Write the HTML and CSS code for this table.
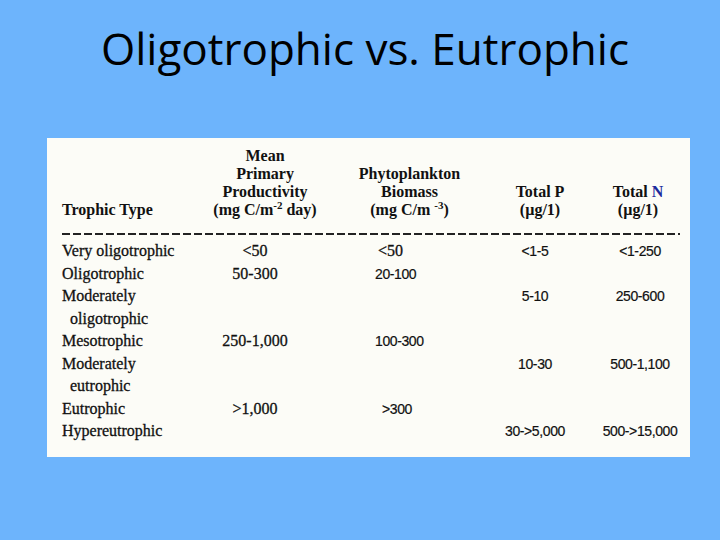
FILE: index.html
```html
<!DOCTYPE html>
<html lang="en">
<head>
  <meta charset="UTF-8" />
  <title>Oligotrophic vs. Eutrophic</title>
  <link rel="stylesheet" href="styles.css">
</head>
<body>
  <h1 class="title">Oligotrophic vs. Eutrophic</h1>

  <div class="sheet">
    <div class="trophic">
      <div class="head col-type">Trophic Type</div>
      <div class="head col-prod">Mean<br>Primary<br>Productivity<br>(mg C/m<sup>-2</sup> day)</div>
      <div class="head col-bio">Phytoplankton<br>Biomass<br>(mg C/m <sup>-3</sup>)</div>
      <div class="head col-p">Total P<br>(&micro;g/1)</div>
      <div class="head col-n">Total <span class="ink">N</span><br>(&micro;g/1)</div>

      <div class="rule"></div>

      <div class="type">Very oligotrophic</div>
      <div class="prod">&lt;50</div>
      <div class="bio">&lt;50</div>
      <div class="num p">&lt;1-5</div>
      <div class="num n">&lt;1-250</div>

      <div class="type">Oligotrophic</div>
      <div class="prod">50-300</div>
      <div class="num bio">20-100</div>
      <div class="num p"></div>
      <div class="num n"></div>

      <div class="type">Moderately<br><span class="indent">oligotrophic</span></div>
      <div class="prod"></div>
      <div class="num bio"></div>
      <div class="num p">5-10</div>
      <div class="num n">250-600</div>

      <div class="type">Mesotrophic</div>
      <div class="prod">250-1,000</div>
      <div class="num bio">100-300</div>
      <div class="num p"></div>
      <div class="num n"></div>

      <div class="type">Moderately<br><span class="indent">eutrophic</span></div>
      <div class="prod"></div>
      <div class="num bio"></div>
      <div class="num p">10-30</div>
      <div class="num n">500-1,100</div>

      <div class="type">Eutrophic</div>
      <div class="prod">&gt;1,000</div>
      <div class="num bio shift">&gt;300</div>
      <div class="num p"></div>
      <div class="num n"></div>

      <div class="type">Hypereutrophic</div>
      <div class="prod"></div>
      <div class="num bio"></div>
      <div class="num p">30-&gt;5,000</div>
      <div class="num n">500-&gt;15,000</div>
    </div>
  </div>
</body>
</html>
```

FILE: styles.css
```css
* {
  box-sizing: border-box;
}

body {
  margin: 0;
  height: 540px;
  background: #6db4fc;
  color: #111;
  overflow: hidden;
}

.title {
  margin: 0;
  padding-top: 18px;
  text-align: center;
  font-family: "Open Sans", sans-serif;
  font-weight: normal;
  font-size: 44px;
  line-height: 60px;
  color: #000;
  padding-left: 10px;
}

.sheet {
  margin: 60px 0 0 47px;
  width: 643px;
  height: 319px;
  background: #fcfcf7;
  padding: 9px 0 0 15px;
}

.trophic {
  display: grid;
  grid-template-columns: 138px 130px 155px 110px 90px;
  align-items: start;
  font-family: "Liberation Serif", serif;
  font-size: 16px;
  color: #111;
  -webkit-text-stroke: 0.3px #111;
}

.head {
  align-self: end;
  font-weight: bold;
  line-height: 18px;
  text-align: center;
  -webkit-text-stroke: 0;
}

.head.col-type {
  text-align: left;
}

.head.col-bio {
  padding-left: 4px;
}

.head.col-n {
  padding-right: 4px;
}

.ink {
  color: #1c2a9c;
}

sup {
  font-size: 11px;
  line-height: 0;
  vertical-align: 6px;
}

.rule {
  grid-column: 1 / -1;
  height: 2px;
  margin: 14px 5px 5px 0;
  background: repeating-linear-gradient(to right, #222 0 8px, transparent 8px 11px);
}

.type,
.prod,
.bio,
.num {
  line-height: 22.5px;
}

.indent {
  padding-left: 8px;
}

.prod {
  text-align: center;
  padding-right: 20px;
}

.bio {
  padding-left: 48px;
}

.num {
  font-family: "Liberation Sans", sans-serif;
  font-size: 14px;
  letter-spacing: -0.4px;
  text-align: center;
  -webkit-text-stroke: 0.2px #111;
}

.num.bio {
  text-align: left;
  padding-left: 45px;
}

.num.bio.shift {
  padding-left: 52px;
}

.num.p {
  padding-right: 10px;
}
```
